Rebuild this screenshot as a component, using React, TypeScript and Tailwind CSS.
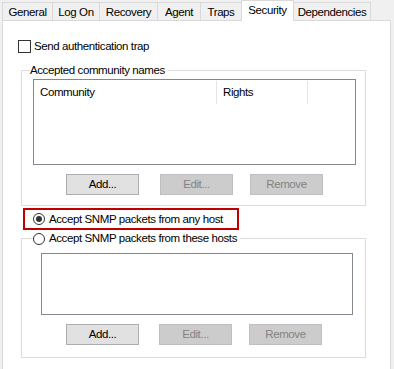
import React from "react";

const tabs = [
  { label: "General", w: "w-[51px]" },
  { label: "Log On", w: "w-[48px]" },
  { label: "Recovery", w: "w-[59px]" },
  { label: "Agent", w: "w-[44px]" },
  { label: "Traps", w: "w-[42px]" },
  { label: "Security", w: "w-[53px]", selected: true },
  { label: "Dependencies", w: "w-[78px]" },
];

function Radio({ checked }: { checked?: boolean }) {
  return (
    <div className="w-[12px] h-[12px] shrink-0 rounded-full border border-[#333333] bg-white flex items-center justify-center">
      {checked && <div className="w-[6px] h-[6px] rounded-full bg-[#333333]" />}
    </div>
  );
}

function Btn({
  children,
  disabled,
  className,
}: {
  children: React.ReactNode;
  disabled?: boolean;
  className: string;
}) {
  return (
    <div
      className={
        "w-[73px] h-[21px] flex items-center justify-center border " +
        (disabled
          ? "bg-[#cccccc] border-[#bfbfbf] text-[#838383] "
          : "bg-[#e1e1e1] border-[#adadad] text-black ") +
        className
      }
    >
      {children}
    </div>
  );
}

export default function App() {
  return (
    <div className="w-[394px] h-[369px] overflow-hidden bg-[#f0f0f0] text-black font-['Liberation_Sans',Arial,sans-serif] text-[11.5px] leading-[15px] tracking-[-0.4px]">
      <div className="flex items-end h-[20px] pl-[2px]">
        {tabs.map((t, i) =>
          t.selected ? (
            <div
              key={t.label}
              className={
                "relative z-10 -ml-[1px] h-[21px] -mb-[1px] bg-white border border-b-0 border-[#d9d9d9] flex items-center justify-center pb-[2px] " +
                t.w
              }
            >
              {t.label}
            </div>
          ) : (
            <div
              key={t.label}
              className={
                (i === 0 ? "" : "-ml-[1px] ") +
                "h-[18px] bg-[#f0f0f0] border border-b-0 border-[#d9d9d9] flex items-center justify-center pt-[2px] " +
                t.w
              }
            >
              {t.label}
            </div>
          )
        )}
      </div>

      <div className="ml-[2px] w-[389px] h-[360px] bg-white border border-[#d9d9d9] flex flex-col items-start">
        <div className="mt-[19px] ml-[15px] flex items-center h-[13px]">
          <div className="w-[13px] h-[13px] border border-[#333333] bg-white" />
          <span className="ml-[3px]">Send authentication trap</span>
        </div>

        <fieldset className="mt-[10px] ml-[18px] w-[345px] border border-[#dcdcdc] pb-[10px]">
          <legend className="ml-[8px] pr-[3px] h-[15px] leading-[15px]">
            Accepted community names
          </legend>
          <div className="mt-[1px] ml-[11px] w-[323px] h-[86px] border border-[#828790] bg-white">
            <div className="flex h-[24px] pt-[1px]">
              <div className="w-[183px] border-r border-[#e5e5e5] flex items-center pl-[6px]">
                Community
              </div>
              <div className="w-[91px] border-r border-[#e5e5e5] flex items-center pl-[6px]">
                Rights
              </div>
            </div>
          </div>
          <div className="mt-[9px] flex">
            <Btn className="ml-[44px]">Add...</Btn>
            <Btn disabled className="ml-[21px]">
              Edit...
            </Btn>
            <Btn disabled className="ml-[17px]">
              Remove
            </Btn>
          </div>
        </fieldset>

        <div className="mt-[2px] ml-[20px] w-[216px] h-[22px] border-2 border-[#c00000] flex items-center pl-[8px]">
          <Radio checked />
          <span className="ml-[4px]">Accept SNMP packets from any host</span>
        </div>

        <fieldset className="mt-[1px] ml-[18px] w-[345px] border border-[#dcdcdc] pb-[12px]">
          <legend className="ml-[11px] pr-[3px]">
            <div className="flex items-center h-[15px]">
              <Radio />
              <span className="ml-[4px]">Accept SNMP packets from these hosts</span>
            </div>
          </legend>
          <div className="mt-[7px] ml-[19px] w-[312px] h-[62px] border border-[#828790] bg-white" />
          <div className="mt-[9px] flex">
            <Btn className="ml-[44px]">Add...</Btn>
            <Btn disabled className="ml-[20px]">
              Edit...
            </Btn>
            <Btn disabled className="ml-[17px]">
              Remove
            </Btn>
          </div>
        </fieldset>
      </div>
    </div>
  );
}
